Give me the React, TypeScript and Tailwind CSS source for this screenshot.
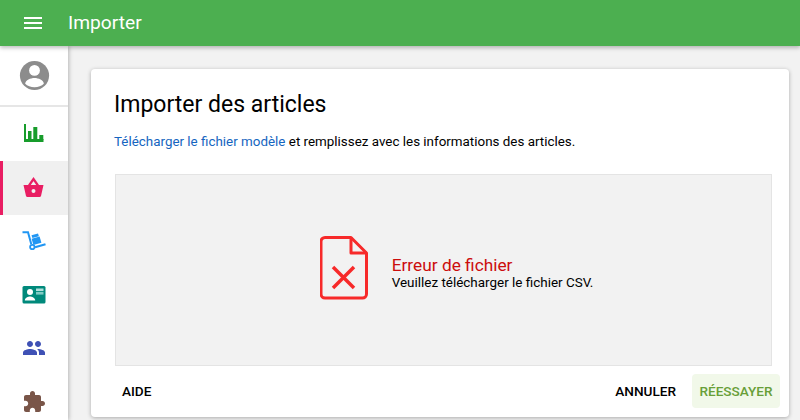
import React from "react";

const Icon = ({ d, className }: { d: string; className: string }) => (
  <svg viewBox="0 0 24 24" fill="currentColor" className={className}>
    <path d={d} />
  </svg>
);

const Account = () => (
  <svg viewBox="0 0 24 24" className="w-[35px] h-[35px]">
    <circle cx="12" cy="12" r="10" fill="#8c8c8c" />
    <circle cx="12" cy="8.500" r="3.700" fill="#fff" />
    <path d="M5.600 17.600c.1-2.500 3.800-3.900 6.400-3.900s6.300 1.400 6.400 3.900c-1.500 1.500-3.800 2.400-6.400 2.400s-4.900-.9-6.400-2.400z" fill="#fff" />
  </svg>
);

const Bars = () => (
  <svg viewBox="0 0 24 24" className="w-6 h-6 text-[#179c2b]" fill="currentColor">
    <rect x="2" y="2" width="2" height="18" />
    <rect x="2" y="17" width="19.500" height="3" />
    <rect x="6" y="9" width="3.500" height="9" />
    <rect x="11.300" y="5" width="4" height="13" />
    <rect x="17.300" y="13" width="4" height="5" />
  </svg>
);

const Basket = () => (
  <svg viewBox="0 0 24 24" className="w-6 h-6 text-[#e91e63]">
    <path d="M7 9.500L11.500 3l4.500 6.500" fill="none" stroke="currentColor" strokeWidth="2.200" />
    <path
      fillRule="evenodd"
      fill="currentColor"
      d="M1.500 9h20l-2.500 11a1.500 1.500 0 0 1-1.500 1h-12a1.500 1.500 0 0 1-1.500-1zM11.500 13a2 2 0 1 0 0 4 2 2 0 0 0 0-4z"
    />
  </svg>
);

const Truck = () => (
  <svg viewBox="0 0 25 25" className="w-[25px] h-[25px] text-[#2196f3]" fill="currentColor">
    <path d="M.5 3.200h5.500l3.300 12" fill="none" stroke="currentColor" strokeWidth="2" />
    <circle cx="10.300" cy="18" r="2.200" fill="none" stroke="currentColor" strokeWidth="1.800" />
    <path d="M13.300 19.200l10.500-3-.6-1.900-10.500 3z" />
    <path d="M9.600 9.800l8-2.200 1.800 6.200-8 2.200z" />
    <path d="M9.500 6.200l6.500-1.800.9 2.900-6.500 1.800z" />
  </svg>
);

const Card = () => (
  <svg viewBox="0 0 24 24" className="w-6 h-6">
    <rect x="0.500" y="3" width="23" height="17.500" rx="1.500" fill="#00897b" />
    <circle cx="8" cy="9" r="3" fill="#fff" />
    <path d="M2.800 17.600c0-2.800 3.400-4.100 5.200-4.100s5.200 1.300 5.200 4.100z" fill="#fff" />
    <rect x="14" y="5.500" width="7.500" height="2.600" fill="#b2dfdb" />
    <rect x="14" y="9" width="7.500" height="2.600" fill="#80cbc4" />
  </svg>
);

const items: { icon: React.ReactNode; active?: boolean }[] = [
  { icon: <Bars /> },
  { active: true, icon: <Basket /> },
  { icon: <Truck /> },
  { icon: <Card /> },
  {
    icon: (
      <Icon
        className="w-6 h-6 text-[#3f51b5]"
        d="M16 11c1.660 0 2.990-1.340 2.990-3S17.660 5 16 5c-1.660 0-3 1.340-3 3s1.340 3 3 3zm-8 0c1.660 0 2.990-1.340 2.990-3S9.660 5 8 5C6.340 5 5 6.340 5 8s1.340 3 3 3zm0 2c-2.330 0-7 1.170-7 3.500V19h14v-2.500c0-2.330-4.670-3.500-7-3.500zm8 0c-.29 0-.62.02-.97.05 1.160.84 1.970 1.970 1.970 3.450V19h6v-2.500c0-2.330-4.670-3.500-7-3.500z"
      />
    ),
  },
  {
    icon: (
      <Icon
        className="w-6 h-6 text-[#795548]"
        d="M20.500 11H19V7c0-1.100-.9-2-2-2h-4V3.500C13 2.120 11.880 1 10.500 1S8 2.120 8 3.500V5H4c-1.100 0-1.990.9-1.990 2v3.800H3.500c1.490 0 2.700 1.210 2.700 2.700s-1.210 2.700-2.700 2.700H2V20c0 1.100.9 2 2 2h3.800v-1.500c0-1.490 1.210-2.700 2.700-2.700 1.490 0 2.700 1.210 2.700 2.700V22H17c1.100 0 2-.9 2-2v-4h1.500c1.380 0 2.500-1.120 2.500-2.500S21.880 11 20.500 11z"
      />
    ),
  },
];

export default function App() {
  return (
    <div className="w-[800px] h-[420px] overflow-hidden flex flex-col bg-[#f2f2f2] text-black font-['Roboto',sans-serif]">
      <header className="relative z-10 h-[46px] shrink-0 bg-[#4caf50] flex items-center pl-[21px] text-white shadow-[0_2px_4px_rgba(0,0,0,0.25)]">
        <Icon className="w-6 h-6 text-white" d="M3 18h18v-2H3v2zm0-5h18v-2H3v2zm0-7v2h18V6H3z" />
        <span className="ml-[23px] text-[19.200px] leading-none">Importer</span>
      </header>
      <div className="flex flex-1 min-h-0">
        <aside className="w-[68px] shrink-0 bg-white shadow-[1px_0_4px_rgba(0,0,0,0.25)] flex flex-col">
          <div className="h-[61px] shrink-0 flex items-center justify-center border-b-2 border-[#e6e6e6]">
            <Account />
          </div>
          {items.map((it, i) => (
            <div
              key={i}
              className={
                it.active
                  ? "h-[54px] shrink-0 flex items-center justify-center bg-[#f0f0f0] border-l-[3px] border-[#e91e63] pr-[3px]"
                  : "h-[53.500px] shrink-0 flex items-center justify-center"
              }
            >
              {it.icon}
            </div>
          ))}
        </aside>
        <main className="flex-1 min-w-0 pl-[23px] pr-[11px] pt-[23px] pb-[3px] flex">
          <section className="flex-1 bg-white rounded shadow-[0_1px_4px_rgba(0,0,0,0.3)] flex flex-col pl-6 pr-[17px]">
            <h1 className="text-[23px] leading-[30px] mt-[21px] -ml-px">Importer des articles</h1>
            <p className="text-[13.400px] leading-5 mt-[12px] -ml-px">
              <span className="text-[#1565c0]">Télécharger le fichier modèle</span> et remplissez avec les informations des articles.
            </p>
            <div className="mt-[22px] h-[192px] shrink-0 bg-[#f2f2f2] border border-[#e4e4e4] flex items-center justify-center pl-[26px]">
              <svg viewBox="0 0 48 64" className="w-[48px] h-[64px] mr-6 -mt-[5px]" fill="none" stroke="#f72a2a" strokeWidth="3">
                <path d="M5 1.500h26L46.500 17v41a4 4 0 0 1-4 4H5a4 4 0 0 1-4-4V5.500a4 4 0 0 1 4-4z" strokeLinejoin="round" />
                <path d="M31 1.500V17h15.500" strokeLinejoin="round" />
                <path d="M13 31l21 21M34 31L13 52" strokeWidth="3.500" />
              </svg>
              <div className="mt-[7px]">
                <div className="text-[17.300px] leading-[18px] text-[#cc0d0d]">Erreur de fichier</div>
                <div className="text-[13.440px] leading-[18px]">Veuillez télécharger le fichier CSV.</div>
              </div>
            </div>
            <div className="flex items-center h-[50px] pl-[7px] -mr-[8px]">
              <button className="h-[34px] text-[13.600px] font-medium">AIDE</button>
              <div className="flex-1" />
              <button className="h-[34px] text-[13.600px] font-medium mr-4">ANNULER</button>
              <button className="w-[88px] h-[34px] text-[13.600px] font-medium bg-[#f1f8e9] text-[#689f38] rounded">RÉESSAYER</button>
            </div>
          </section>
        </main>
      </div>
    </div>
  );
}
